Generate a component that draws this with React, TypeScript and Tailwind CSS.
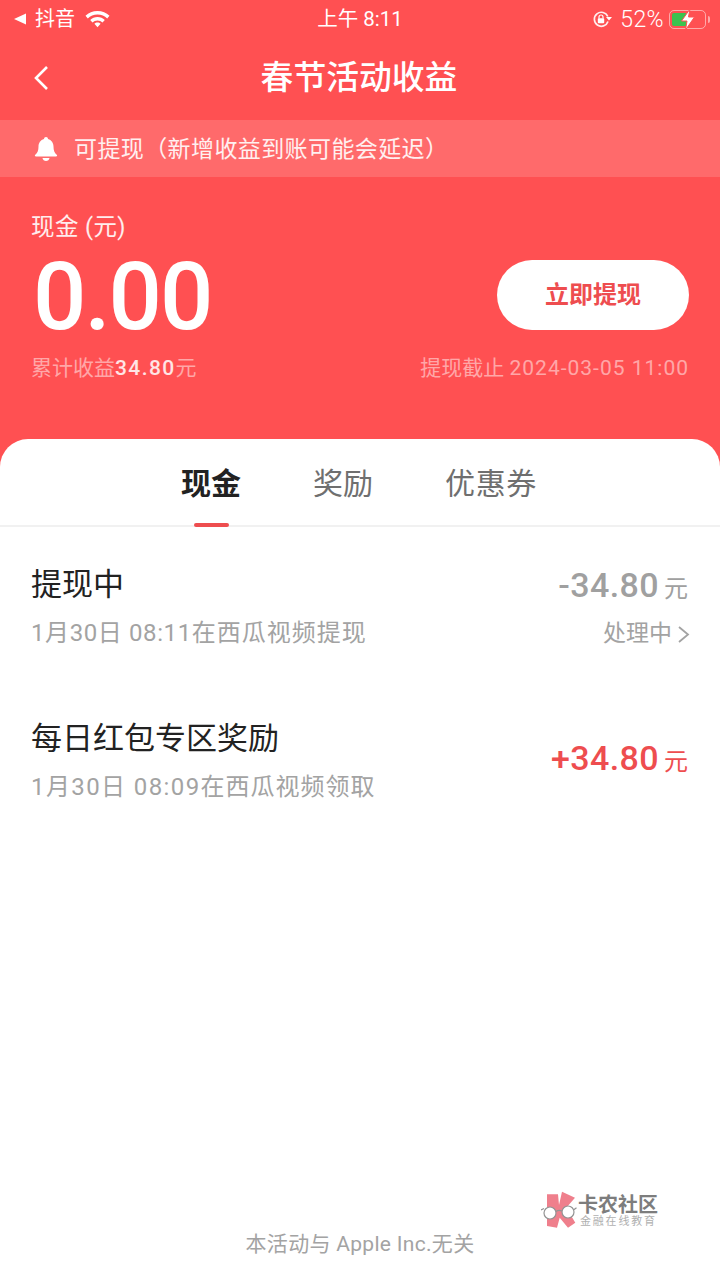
import React from 'react';

const FONT = "font-['Roboto','Noto_Sans_CJK_SC',sans-serif]";

function StatusBar() {
  return (
    <div className="flex h-[38px] items-center justify-between pl-[13px] pr-[10px] text-[20px] leading-none text-white">
      <div className="flex w-[200px] items-center">
        <svg width="14" height="14" viewBox="0 0 14 14"><path d="M13 1.5v11L1 7z" fill="#fff" /></svg>
        <span className="ml-[8px]">抖音</span>
        <svg className="ml-[9px]" width="27" height="20" viewBox="0 0 27 20">
          <path d="M13.5 2C8.8 2 4.6 3.8 1.5 6.800l2.300 2.600C6.300 7 9.700 5.500 13.500 5.500s7.200 1.500 9.700 3.900l2.300-2.600C22.400 3.800 18.200 2 13.500 2z" fill="#fff" />
          <path d="M13.500 8c-2.800 0-5.400 1.100-7.300 2.900l2.300 2.500c1.300-1.200 3.100-2 5-2s3.700.8 5 2l2.300-2.500C18.900 9.100 16.300 8 13.500 8z" fill="#fff" />
          <path d="M13.500 13.600c-1.200 0-2.300.5-3.100 1.200l3.100 3.400 3.100-3.400c-.8-.7-1.900-1.200-3.100-1.200z" fill="#fff" />
        </svg>
      </div>
      <span className="mr-[3px] text-[20.500px]">上午 8:11</span>
      <div className="flex w-[200px] items-center justify-end">
        <svg width="21" height="20" viewBox="0 0 21 20" fill="none">
          <path d="M14.800 7.500A7 7 0 1 0 15 12.500" stroke="#fff" strokeOpacity="0.9" strokeWidth="1.700" />
          <path d="M13 8h6l-3 3.500z" fill="#fff" />
          <rect x="4.800" y="9.300" width="6.400" height="5" rx="0.800" fill="#fff" />
          <path d="M6 9.500V8a2 2 0 0 1 4 0v1.500" stroke="#fff" strokeWidth="1.200" />
        </svg>
        <span className="ml-[6px] text-[23px] font-light tracking-[0.400px]">52%</span>
        <div className="relative ml-[5px] h-[19px] w-[37px] rounded-[5px] border border-white/50 p-[2px]">
          <div className="h-full w-[15px] rounded-[2px] bg-[#3cc24f]" />
          <svg className="absolute left-[10px] top-[-3px]" width="16" height="23" viewBox="0 0 16 23">
            <path d="M10 1L1.500 13H7L5.500 22 14.500 9H8.500z" fill="#fff" stroke="#ff5052" strokeWidth="1" />
          </svg>
        </div>
        <div className="ml-[2px] h-[7px] w-[2px] rounded-r-sm bg-white/50" />
      </div>
    </div>
  );
}

function Logo() {
  return (
    <div className="flex items-start opacity-90">
      <svg width="42" height="38" viewBox="-1 0 42 38">
        <path d="M5 3.300H16L17 14 20 .7 33 6.700 24.300 16.700 33.300 31.700 26 36.700 17.700 26.700 15 36.700 5 35z" fill="#ee7280" />
        <path d="M-1 19L2 17.500M14 20.500c2-1.500 4-1.500 6 -.5M31.500 19l3-2.300" stroke="#888" strokeWidth="1.200" fill="none" />
        <circle cx="8" cy="22" r="6" fill="#fff" stroke="#888" strokeWidth="1.200" />
        <circle cx="26" cy="21" r="6" fill="#fff" stroke="#888" strokeWidth="1.200" />
      </svg>
      <div className="ml-[-5px] mt-[3px] flex flex-col">
        <span className="text-[20px] leading-[22px] font-bold text-[#6f6f6f]">卡农社区</span>
        <span className="mt-[-1px] ml-[2px] text-[11px] leading-[14px] tracking-[1.800px] text-[#a8a8a8]">金融在线教育</span>
      </div>
    </div>
  );
}

function Row({ title, time, timeClass, place, amount, unitClass, status }: {
  title: string; time: string; timeClass: string; place: string; amount: string; unitClass: string; status?: string;
}) {
  return (
    <div className="flex h-[154px] items-start justify-between pl-[31px] pr-[32px]">
      <div>
        <div className="mt-[2px] text-[31px] leading-[40px] text-[#222]">{title}</div>
        <div className="mt-[12px] text-[24px] leading-[32px] text-[#a3a3a3]">
          <span className={timeClass}>{time}</span>
          <span className="tracking-[1px]">{place}</span>
        </div>
      </div>
      <div className={`flex flex-col items-end ${status ? 'mt-[2px]' : 'mt-[21px]'}`}>
        <div className={`flex items-baseline leading-[40px] ${unitClass}`}>
          <span className="text-[34px] font-medium tracking-[0.400px]">{amount}</span>
          <span className="ml-[5px] text-[24px]">元</span>
        </div>
        {status && (
          <div className="mt-[9px] flex items-center text-[23px] leading-[32px] text-[#a3a3a3]">
            {status}
            <svg className="ml-[5px] mr-[-2px]" width="13" height="19" viewBox="0 0 13 19" fill="none">
              <path d="M2 2l9 7.500-9 7.500" stroke="#a3a3a3" strokeWidth="1.800" />
            </svg>
          </div>
        )}
      </div>
    </div>
  );
}

export default function App() {
  return (
    <div className={`flex h-[1280px] w-[720px] flex-col overflow-hidden bg-[#ff5052] ${FONT}`}>
      <StatusBar />
      <div className="relative flex h-[82px] items-center justify-center">
        <svg className="absolute left-[33px] top-[27px]" width="16" height="26" viewBox="0 0 16 26" fill="none">
          <path d="M14 2L3 13l11 11" stroke="#fff" strokeWidth="2.600" />
        </svg>
        <span className="mr-[2px] text-[32.800px] font-medium text-white">春节活动收益</span>
      </div>
      <div className="flex h-[57px] items-center bg-white/15 pl-[34px] text-[23px] text-white/90">
        <svg width="24" height="26" viewBox="0 0 24 26">
          <path d="M12 1c-1.200 0-2 .8-2 1.900C6.500 3.900 4.500 7 4.500 10.500c0 4-1 6.500-3.200 8.300-.8.7-.5 1.700.7 1.700h20c1.200 0 1.500-1 .7-1.700-2.200-1.800-3.200-4.300-3.200-8.300 0-3.500-2-6.600-5.500-7.600C14 1.800 13.200 1 12 1z" fill="#fff" />
          <path d="M8.500 22h7c-.3 1.800-1.700 3-3.500 3s-3.200-1.200-3.500-3z" fill="#fff" />
        </svg>
        <span className="ml-[16px] pt-[3px] tracking-[0.400px]">可提现（新增收益到账可能会延迟）</span>
      </div>
      <div className="flex h-[262px] flex-col pl-[31px] pr-[31px]">
        <div className="mt-[34px] text-[23.500px] leading-[32px] tracking-[0.400px] text-white/90">现金 (元)</div>
        <div className="flex h-[98px] items-center justify-between">
          <span className="ml-[2px] mt-[10px] text-[94px] font-medium leading-none tracking-[-2px] text-white">0.00</span>
          <button className="mt-[6px] h-[70px] w-[192px] rounded-full bg-white text-[24px] font-bold text-[#ee4d4f]">立即提现</button>
        </div>
        <div className="mt-[12px] flex items-center justify-between text-[21px] leading-[30px] text-white/50">
          <span>累计收益<span className="font-medium tracking-[1.400px] text-white/85">34.80</span>元</span>
          <span>提现截止 <span className="tracking-[1px]">2024-03-05 11:00</span></span>
        </div>
      </div>
      <div className="flex flex-1 flex-col rounded-t-[28px] bg-white">
        <div className="flex h-[88px] items-center justify-center gap-[72px] border-b-2 border-[#f1f1f1] pr-[2px] text-[30px] text-[#6f6f6f]">
          <div className="relative flex h-full items-center pt-[2px] font-bold text-[#222]">
            现金
            <div className="absolute bottom-[-2px] left-[13px] h-[4px] w-[35px] rounded-full bg-[#ee4d4f]" />
          </div>
          <span className="pt-[2px]">奖励</span>
          <span className="pt-[2px] tracking-[0.600px]">优惠券</span>
        </div>
        <div className="mt-[36px]">
          <Row title="提现中" time="1月30日 08:11" timeClass="tracking-[0.600px]" place="在西瓜视频提现" amount="-34.80" unitClass="text-[#a0a0a0]" status="处理中" />
          <Row title="每日红包专区奖励" time="1月30日 08:09" timeClass="tracking-[1.400px]" place="在西瓜视频领取" amount="+34.80" unitClass="text-[#ee4d4f]" />
        </div>
        <div className="mt-auto flex justify-end pr-[62px]">
          <Logo />
        </div>
        <div className="mb-[21px] mt-0 text-center text-[21px] leading-[30px] tracking-[0.300px] text-[#a3a3a3]">本活动与 Apple Inc.无关</div>
      </div>
    </div>
  );
}
